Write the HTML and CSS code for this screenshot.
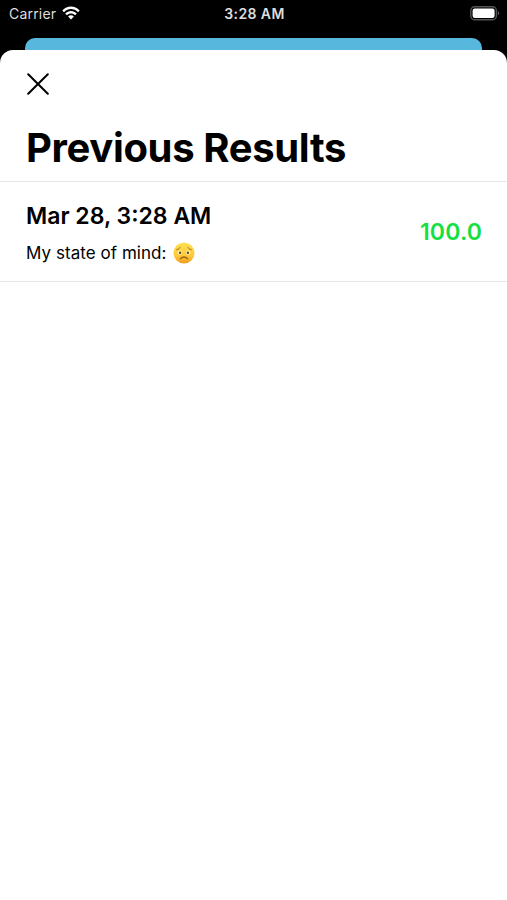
FILE: index.html
```html
<!DOCTYPE html>
<html lang="en">
<head>
<meta charset="utf-8">
<title>Previous Results</title>
<link rel="stylesheet" href="styles.css">
</head>
<body>
<div class="screen">
  <header class="status">
    <div class="network">
      <span class="carrier">Carrier</span>
      <svg class="wifi" viewBox="0 0 18 14" width="18" height="14">
        <path d="M.3 4.500C5-.9 13-.9 17.700 4.500l-1.700 1.800C12 1.900 6 1.900 2 6.300z"/>
        <path d="M3.200 7.500c3.300-3.500 8.300-3.500 11.600 0l-1.700 1.800c-2.400-2.500-5.800-2.500-8.200 0z"/>
        <path d="M6.100 10.500c1.600-1.700 4.200-1.700 5.800 0L9 13.600z"/>
      </svg>
    </div>
    <span class="clock">3:28 AM</span>
    <svg class="battery" viewBox="0 0 30 15" width="30" height="15">
      <rect x=".8" y=".8" width="25.600" height="12.900" rx="3.800" fill="none" stroke="#555" stroke-width="1.400"/>
      <rect x="2.600" y="2.500" width="22" height="9.500" rx="2.200" fill="#fff"/>
      <path d="M27.800 5v4.500c2-.8 2-3.700 0-4.500z" fill="#555"/>
    </svg>
  </header>
  <div class="backdrop"></div>
  <main class="sheet">
    <button class="close" aria-label="Close">
      <svg viewBox="0 0 22 22" width="22" height="22"><path d="M1.200 1.200l19.600 19.600M20.800 1.200L1.200 20.800"/></svg>
    </button>
    <h1 class="title">Previous Results</h1>
    <section class="result">
      <div class="details">
        <h2 class="date">Mar 28, 3:28 AM</h2>
        <p class="mood"><span class="mood-text">My state of mind:</span>
          <svg class="face" viewBox="0 0 22 22" width="22" height="22">
            <defs>
              <linearGradient id="skin" x1="0" y1="0" x2="0" y2="1">
                <stop offset="0" stop-color="#ffe256"/>
                <stop offset=".65" stop-color="#fdc738"/>
                <stop offset="1" stop-color="#ef9d20"/>
              </linearGradient>
            </defs>
            <circle cx="11" cy="11" r="10.500" fill="url(#skin)"/>
            <g fill="none" stroke="#9a6414" stroke-linecap="round">
              <path d="M3.600 7.800Q6 7.200 7.300 5.400M18.400 7.800Q16 7.200 14.700 5.400" stroke-width=".9"/>
              <path d="M7.300 16.700Q11 13.300 14.700 16.700" stroke-width="1.200"/>
            </g>
            <g fill="#fff3ba">
              <circle cx="7" cy="10.600" r="2.200"/>
              <circle cx="15" cy="10.600" r="2.200"/>
            </g>
            <g fill="#69400f">
              <circle cx="7.100" cy="10.700" r="1.200"/>
              <circle cx="14.900" cy="10.700" r="1.200"/>
            </g>
          </svg>
        </p>
      </div>
      <span class="score">100.0</span>
    </section>
  </main>
</div>
</body>
</html>
```

FILE: styles.css
```css
* { box-sizing: border-box; }
body {
  margin: 0;
  background: #000;
  font-family: Inter, "Liberation Sans", sans-serif;
}
.screen {
  display: flex;
  flex-direction: column;
  height: 900px;
  overflow: hidden;
}
.status {
  display: grid;
  grid-template-columns: 1fr auto 1fr;
  align-items: center;
  height: 38px;
  padding: 0 7px 10px 9px;
  color: #ddd;
}
.network { display: flex; align-items: center; gap: 6px; }
.carrier { font-size: 14px; letter-spacing: .2px; line-height: 18px; }
.wifi { fill: #fff; margin-top: -2px; }
.clock { font-size: 14px; font-weight: 600; letter-spacing: .4px; line-height: 18px; }
.battery { justify-self: end; margin-top: -2px; }
.backdrop {
  height: 12px;
  margin: 0 25px;
  background: #58b7dd;
  border-radius: 10px 10px 0 0;
}
.sheet {
  flex: 1;
  background: #fff;
  border-radius: 13px 13px 0 0;
  color: #000;
}
.close {
  display: block;
  margin: 23px 0 0 27px;
  padding: 0;
  width: 22px;
  height: 22px;
  border: 0;
  background: none;
}
.close svg { display: block; fill: none; stroke: #000; stroke-width: 2; stroke-linecap: round; }
.title {
  margin: 0;
  padding: 29px 25px 9px 26px;
  height: 87px;
  border-bottom: 1px solid #e5e5e6;
  font-size: 40px;
  font-weight: 700;
  line-height: 48px;
  letter-spacing: -.35px;
  white-space: nowrap;
}
.result {
  display: flex;
  align-items: center;
  justify-content: space-between;
  height: 100px;
  padding: 0 25px 0 26px;
  border-bottom: 1px solid #e5e5e6;
}
.details { padding-top: 4px; }
.date {
  margin: 0;
  font-size: 23px;
  font-weight: 600;
  line-height: 28px;
}
.mood { display: flex; align-items: center; gap: 6px; margin: 11px 0 0; }
.mood-text { font-size: 17px; line-height: 24px; letter-spacing: .05px; }
.score { color: #16df43; font-size: 23px; font-weight: 600; line-height: 28px; letter-spacing: .2px; margin-right: -.2px; }
```
